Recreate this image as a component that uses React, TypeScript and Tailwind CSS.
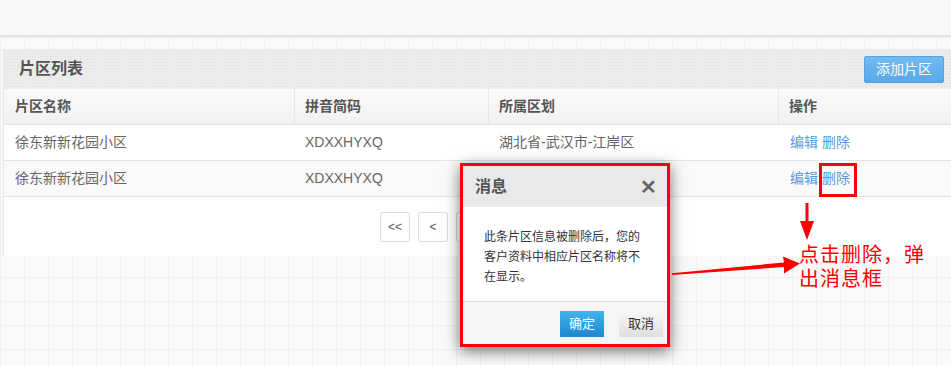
import React from "react";

const font = "font-['Liberation_Sans','Noto_Sans_CJK_SC',sans-serif]";

function Row({ bg }: { bg: string }) {
  return (
    <div className={`flex h-[36px] items-center border-b border-[#e3e3e3] text-[14px] text-[#666] ${bg}`}>
      <div className="w-[291px] px-[11px]">徐东新新花园小区</div>
      <div className="w-[194px] px-[10px]">XDXXHYXQ</div>
      <div className="w-[290px] px-[10px]">湖北省-武汉市-江岸区</div>
      <div className="flex-1 px-[11px] text-[#5b9ad8]">
        编辑 删除
      </div>
    </div>
  );
}

export default function App() {
  return (
    <div className={`relative h-[365px] w-[951px] overflow-hidden ${font}`}>
      {/* top bar */}
      <div className="h-[37px] border-b-2 border-[#e4e4e4] bg-[#f8f8f8]" />
      {/* grid background area */}
      <div className="h-[328px] bg-[#f9f9f9] bg-[image:linear-gradient(to_right,#efefef_1px,transparent_1px),linear-gradient(to_bottom,#efefef_1px,transparent_1px)] bg-[size:24px_24px] pt-[12px] pl-[3px]">
        <div className="border-l border-[#e6e6e6] bg-white">
          {/* panel header */}
          <div className="flex h-[40px] items-center justify-between bg-[#ececec] bg-[image:radial-gradient(#e2e2e2_1px,transparent_1px)] bg-[size:3px_3px] pl-[15px] pr-[7px]">
            <span className="text-[16px] font-bold text-[#555]">片区列表</span>
            <button className="flex h-[27px] w-[80px] items-center justify-center rounded-[2px] border border-[#56a3e2] bg-[linear-gradient(#72bbf2,#5aa8e8)] text-[14px] text-white">
              添加片区
            </button>
          </div>
          {/* table header */}
          <div className="flex h-[36px] items-center border-b border-[#e3e3e3] bg-[linear-gradient(#fafafa,#f1f1f1)] text-[14px] font-bold text-[#555]">
            <div className="flex h-full w-[291px] items-center border-r border-[#e6e6e6] px-[11px]">片区名称</div>
            <div className="flex h-full w-[194px] items-center border-r border-[#e6e6e6] px-[10px]">拼音简码</div>
            <div className="flex h-full w-[290px] items-center border-r border-[#e6e6e6] px-[10px]">所属区划</div>
            <div className="flex h-full flex-1 items-center px-[10px]">操作</div>
          </div>
          <Row bg="bg-white" />
          <Row bg="bg-[#f9f9f9]" />
          {/* pagination */}
          <div className="flex h-[59px] items-start gap-[8px] pl-[376px] pt-[15px] text-[12px] text-[#555]">
            {["<<", "<", "1", ">", ">>"].map((t, i) => (
              <div
                key={i}
                className="flex h-[30px] w-[30px] items-center justify-center rounded-[2px] border border-[#dedede] bg-white"
              >
                {t}
              </div>
            ))}
          </div>
        </div>
      </div>

      {/* modal */}
      <div className="absolute left-[460px] top-[163px] flex h-[184px] w-[210px] flex-col border-[3px] border-[#ff0000] bg-white shadow-[0_4px_14px_rgba(0,0,0,0.55)]">
        <div className="flex h-[41px] items-center justify-between bg-[#e9e9e9] pl-[12px] pr-[10px]">
          <span className="text-[16px] font-bold text-[#555]">消息</span>
          <span className="text-[20px] font-bold leading-none text-[#666]">✕</span>
        </div>
        <div className="flex-1 px-[21px] pt-[20px] text-[12px] leading-[20px] text-[#333]">
          此条片区信息被删除后，您的客户资料中相应片区名称将不在显示。
        </div>
        <div className="flex h-[43px] items-start justify-end gap-[15px] border-t border-[#dcdcdc] bg-[#f5f5f5] pr-[4px] pt-[9px] text-[13px]">
          <button className="h-[26px] w-[44px] bg-[linear-gradient(#3fb5ea,#1f86cf)] text-white">确定</button>
          <button className="h-[26px] w-[44px] bg-[linear-gradient(#f8f8f8,#dedede)] text-[#333]">取消</button>
        </div>
      </div>

      {/* annotation box */}
      <div className="absolute left-[819px] top-[163px] h-[34px] w-[38px] border-[3px] border-[#ff0000]" />

      {/* arrows */}
      <svg className="pointer-events-none absolute left-0 top-0" width="951" height="365" viewBox="0 0 951 365">
        <rect x="805.5" y="203" width="3" height="22" fill="#ff0000" />
        <polygon points="800,221 814,221 807,240" fill="#ff0000" />
        <polygon points="672,273.3 784,262.5 783,256.5 800,263.5 784,273.5 784,267 672,275" fill="#ff0000" />
      </svg>

      {/* annotation text */}
      <div className="absolute left-[799px] top-[243px] text-[20px] leading-[24px] tracking-[1px] text-[#ff0000]">
        点击删除，弹
        <br />
        出消息框
      </div>
    </div>
  );
}
